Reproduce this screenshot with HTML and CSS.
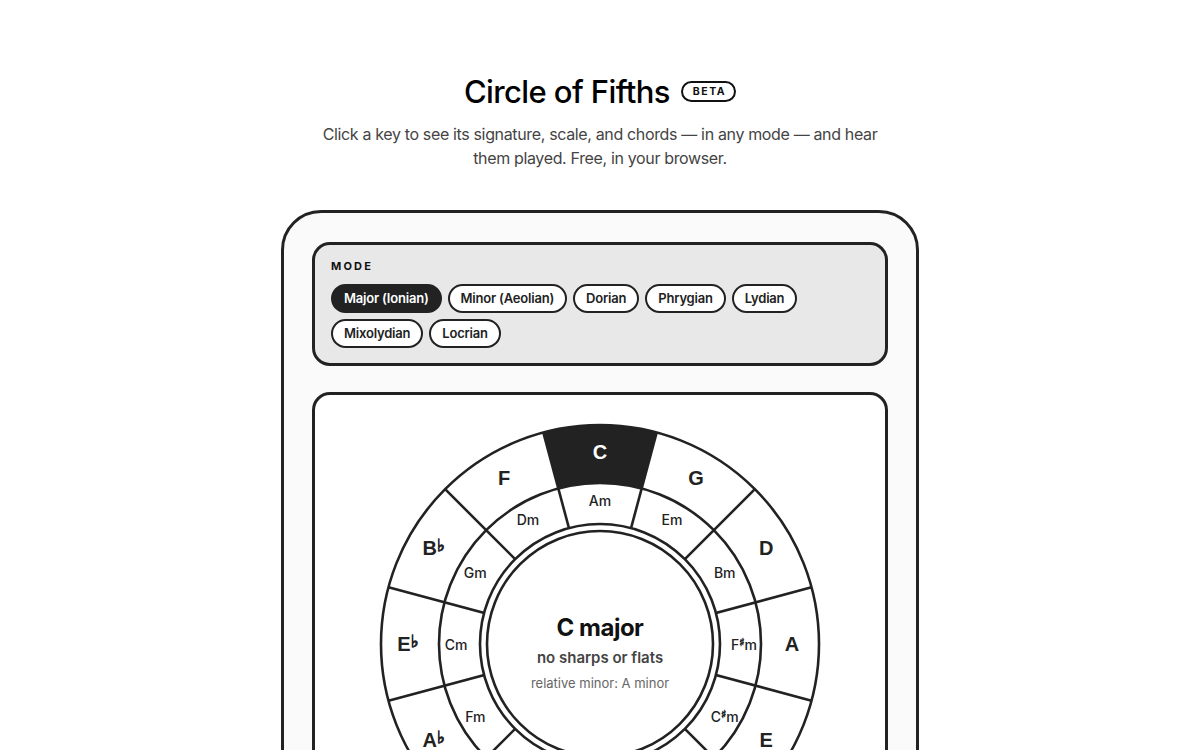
FILE: index.html
```html
<!DOCTYPE html>
<html lang="en">
<head>
<meta charset="utf-8">
<title>Circle of Fifths</title>
<link rel="stylesheet" href="styles.css">
</head>
<body>
<main class="page">
  <header class="hero">
    <h1 class="title">Circle of Fifths <span class="badge">BETA</span></h1>
    <p class="subtitle">Click a key to see its signature, scale, and chords — in any mode — and hear them played. Free, in your browser.</p>
  </header>

  <section class="device">
    <div class="mode-panel">
      <div class="mode-label">MODE</div>
      <div class="pills">
        <button class="pill active">Major (Ionian)</button>
        <button class="pill">Minor (Aeolian)</button>
        <button class="pill">Dorian</button>
        <button class="pill">Phrygian</button>
        <button class="pill">Lydian</button>
        <button class="pill">Mixolydian</button>
        <button class="pill">Locrian</button>
      </div>
    </div>

    <div class="wheel-card">
      <svg class="wheel" width="444" height="444" viewBox="-222 -222 444 444">
        <circle class="ring-bg" cx="0" cy="0" r="219"/>
        <path class="sel" d="M -56.68 -211.54 A 219 219 0 0 1 56.68 -211.54 L 41.67 -155.51 A 161 161 0 0 0 -41.67 -155.51 Z"/>
        <circle class="ln" cx="0" cy="0" r="161"/>
        <line class="ln" x1="0" y1="-219" x2="0" y2="219" transform="rotate(15)"/>
        <line class="ln" x1="0" y1="-219" x2="0" y2="219" transform="rotate(45)"/>
        <line class="ln" x1="0" y1="-219" x2="0" y2="219" transform="rotate(75)"/>
        <line class="ln" x1="0" y1="-219" x2="0" y2="219" transform="rotate(105)"/>
        <line class="ln" x1="0" y1="-219" x2="0" y2="219" transform="rotate(135)"/>
        <line class="ln" x1="0" y1="-219" x2="0" y2="219" transform="rotate(165)"/>
        <circle class="ln" cx="0" cy="0" r="219"/>
        <circle class="hub-outer" cx="0" cy="0" r="120"/>
        <circle class="hub-inner" cx="0" cy="0" r="113"/>

        <g class="major">
          <text class="on" x="0" y="-192">C</text>
          <text x="96" y="-166.28">G</text>
          <text x="166.28" y="-96">D</text>
          <text x="192" y="0">A</text>
          <text x="166.28" y="96">E</text>
          <text x="96" y="166.28">B</text>
          <text x="0" y="192">F<tspan class="acc" dy="-3">♯</tspan></text>
          <text x="-96" y="166.28">D<tspan class="acc" dy="-3">♭</tspan></text>
          <text x="-166.28" y="96">A<tspan class="acc" dy="-3">♭</tspan></text>
          <text x="-192" y="0">E<tspan class="acc" dy="-3">♭</tspan></text>
          <text x="-166.28" y="-96">B<tspan class="acc" dy="-3">♭</tspan></text>
          <text x="-96" y="-166.28">F</text>
        </g>
        <g class="minor">
          <text x="0" y="-144">Am</text>
          <text x="72" y="-124.71">Em</text>
          <text x="124.71" y="-72">Bm</text>
          <text x="144" y="0">F<tspan class="acc2" dy="-2">♯</tspan><tspan dy="2">m</tspan></text>
          <text x="124.71" y="72">C<tspan class="acc2" dy="-2">♯</tspan><tspan dy="2">m</tspan></text>
          <text x="72" y="124.71">G<tspan class="acc2" dy="-2">♯</tspan><tspan dy="2">m</tspan></text>
          <text x="0" y="144">E<tspan class="acc2" dy="-2">♭</tspan><tspan dy="2">m</tspan></text>
          <text x="-72" y="124.71">B<tspan class="acc2" dy="-2">♭</tspan><tspan dy="2">m</tspan></text>
          <text x="-124.71" y="72">Fm</text>
          <text x="-144" y="0">Cm</text>
          <text x="-124.71" y="-72">Gm</text>
          <text x="-72" y="-124.71">Dm</text>
        </g>
        <g class="center">
          <text class="c-key" x="0" y="-17">C major</text>
          <text class="c-sig" x="0" y="13">no sharps or flats</text>
          <text class="c-rel" x="0" y="39">relative minor: A minor</text>
        </g>
      </svg>
    </div>
  </section>
</main>
</body>
</html>
```

FILE: styles.css
```css
* { box-sizing: border-box; }

html, body {
  margin: 0;
  padding: 0;
  background: #ffffff;
  color: #111;
  font-family: "Inter", "Noto Sans", "Liberation Sans", sans-serif;
}

.page {
  padding-top: 72px;
}

.hero {
  text-align: center;
}

.title {
  margin: 0;
  font-size: 31px;
  line-height: 40px;
  font-weight: 500;
  letter-spacing: -0.6px;
  color: #000;
  display: flex;
  justify-content: center;
  align-items: center;
  gap: 11px;
}

.badge {
  display: inline-block;
  font-size: 10.5px;
  line-height: 15px;
  font-weight: 700;
  letter-spacing: 1.5px;
  padding: 1px 8px 1px 10px;
  border: 2px solid #111;
  border-radius: 999px;
  color: #111;
  transform: translateY(-1px);
}

.subtitle {
  margin: 10px auto 0;
  max-width: 580px;
  font-size: 16px;
  line-height: 24px;
  letter-spacing: -0.35px;
  color: #444;
}

.device {
  width: 638px;
  margin: 40px auto 0;
  border: 3px solid #222;
  border-radius: 40px;
  background: #fafafa;
  padding: 29px 28px 28px;
  display: flex;
  flex-direction: column;
  gap: 26px;
}

.mode-panel {
  border: 3px solid #222;
  border-radius: 18px;
  background: #e8e8e8;
  padding: 15px 16px 15px;
}

.mode-label {
  font-size: 11px;
  line-height: 12px;
  font-weight: 700;
  letter-spacing: 2.2px;
  color: #111;
  margin-bottom: 12px;
}

.pills {
  display: flex;
  flex-wrap: wrap;
  gap: 6px;
}

.pill {
  font-family: inherit;
  font-size: 13px;
  line-height: 17px;
  font-weight: 600;
  letter-spacing: -0.2px;
  color: #222;
  background: #ffffff;
  border: 2px solid #222;
  border-radius: 999px;
  padding: 4px 11px;
  margin: 0;
  cursor: pointer;
}

.pill.active {
  background: #222;
  color: #fff;
}

.wheel-card {
  border: 3px solid #222;
  border-radius: 18px;
  background: #ffffff;
  padding: 27px 0 40px;
  display: flex;
  justify-content: center;
}

.wheel {
  display: block;
  overflow: visible;
}

.ring-bg { fill: #fff; }
.sel { fill: #222; }
.ln { fill: none; stroke: #222; stroke-width: 2.6; }
.hub-outer { fill: #fff; stroke: #222; stroke-width: 2.6; }
.hub-inner { fill: #fff; stroke: #222; stroke-width: 2.6; }

.wheel text {
  text-anchor: middle;
  dominant-baseline: central;
}

.major text {
  font-family: "Liberation Sans", Arial, sans-serif;
  font-weight: 700;
  font-size: 20px;
  fill: #222;
}
.major text.on { fill: #fff; }
.major .acc {
  font-family: "DejaVu Sans", sans-serif;
  font-size: 17px;
  font-weight: 700;
  stroke: #222;
  stroke-width: 1;
}

.minor text {
  font-family: "Inter", "Liberation Sans", sans-serif;
  font-weight: 500;
  font-size: 14px;
  fill: #222;
}
.minor .acc2 {
  font-family: "DejaVu Sans", sans-serif;
  font-size: 11px;
  font-weight: 700;
  stroke: #222;
  stroke-width: 0.6;
}

.center .c-key {
  font-family: "Inter", sans-serif;
  font-weight: 700;
  font-size: 24px;
  letter-spacing: -0.5px;
  fill: #111;
}
.center .c-sig {
  font-family: "Inter", sans-serif;
  font-weight: 600;
  font-size: 15px;
  fill: #444;
}
.center .c-rel {
  font-family: "Inter", sans-serif;
  font-weight: 400;
  font-size: 13px;
  fill: #666;
}
```
